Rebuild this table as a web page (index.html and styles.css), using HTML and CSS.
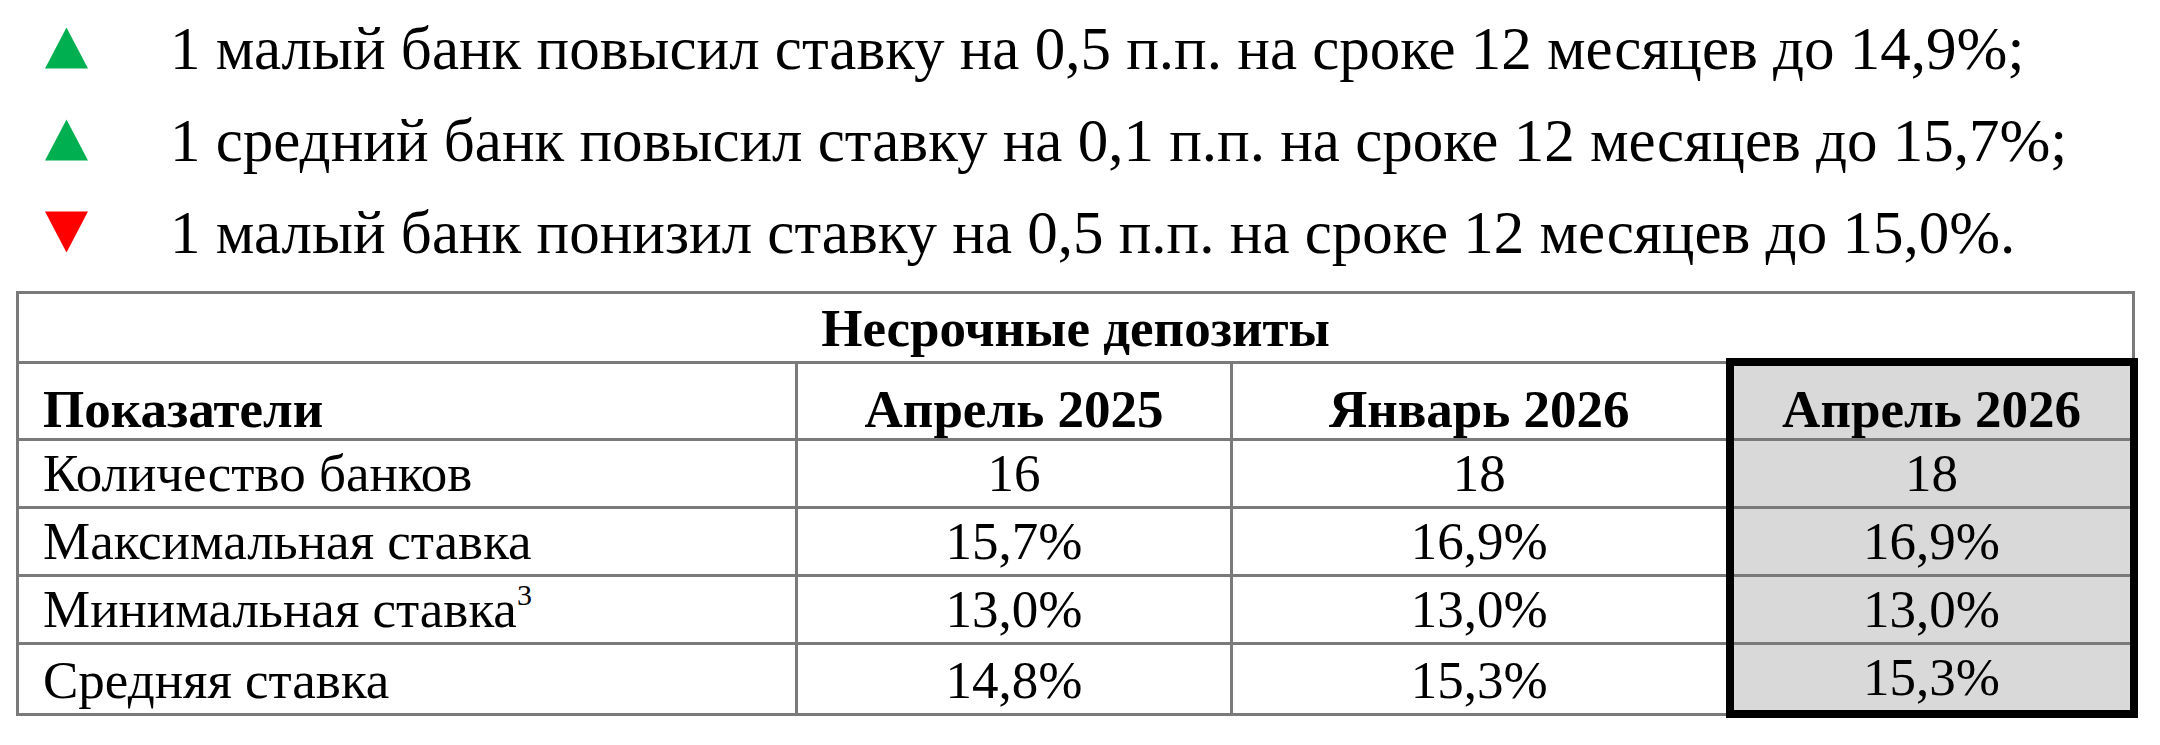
FILE: index.html
```html
<!DOCTYPE html>
<html lang="ru">
<head>
<meta charset="utf-8">
<title>Несрочные депозиты</title>
<link rel="stylesheet" href="styles.css">
</head>
<body>
<div class="page">
  <ul class="changes">
    <li class="change">
      <span class="mark"><svg class="tri" viewBox="0 0 44 42"><polygon points="22,0 44,42 0,42" fill="#00b050"/></svg></span>
      <span class="text">1 малый банк повысил ставку на 0,5 п.п. на сроке 12 месяцев до 14,9%;</span>
    </li>
    <li class="change">
      <span class="mark"><svg class="tri" viewBox="0 0 44 42"><polygon points="22,0 44,42 0,42" fill="#00b050"/></svg></span>
      <span class="text">1 средний банк повысил ставку на 0,1 п.п. на сроке 12 месяцев до 15,7%;</span>
    </li>
    <li class="change">
      <span class="mark"><svg class="tri" viewBox="0 0 44 42"><polygon points="0,0 44,0 22,42" fill="#ff0000"/></svg></span>
      <span class="text">1 малый банк понизил ставку на 0,5 п.п. на сроке 12 месяцев до 15,0%.</span>
    </li>
  </ul>

  <table class="rates">
    <colgroup>
      <col class="c1"><col class="c2"><col class="c3"><col class="c4">
    </colgroup>
    <tr class="title-row">
      <th colspan="4">Несрочные депозиты</th>
    </tr>
    <tr class="head-row">
      <th class="label">Показатели</th>
      <th>Апрель 2025</th>
      <th>Январь 2026</th>
      <th class="hl hl-top">Апрель 2026</th>
    </tr>
    <tr>
      <td class="label">Количество банков</td>
      <td>16</td>
      <td>18</td>
      <td class="hl">18</td>
    </tr>
    <tr>
      <td class="label">Максимальная ставка</td>
      <td>15,7%</td>
      <td>16,9%</td>
      <td class="hl">16,9%</td>
    </tr>
    <tr>
      <td class="label">Минимальная ставка<sup>3</sup></td>
      <td>13,0%</td>
      <td>13,0%</td>
      <td class="hl">13,0%</td>
    </tr>
    <tr>
      <td class="label">Средняя ставка</td>
      <td>14,8%</td>
      <td>15,3%</td>
      <td class="hl hl-bottom">15,3%</td>
    </tr>
  </table>
</div>
</body>
</html>
```

FILE: styles.css
```css
html, body {
  margin: 0;
  padding: 0;
  background: #ffffff;
}

body {
  font-family: "Liberation Serif", "Times New Roman", serif;
  color: #000000;
}

.page {
  padding-top: 3px;
}

.changes {
  list-style: none;
  margin: 0;
  padding: 0;
}

.change {
  display: flex;
  align-items: baseline;
  font-size: 61px;
  line-height: 92px;
  height: 92px;
}

.mark {
  width: 170px;
  flex: none;
  display: flex;
  padding-left: 45px;
  box-sizing: border-box;
}

.tri {
  width: 43px;
  height: 42px;
  display: block;
}

.text {
  white-space: nowrap;
}

.rates {
  margin: 12px 0 0 16px;
  width: 2119px;
  border-collapse: collapse;
  table-layout: fixed;
  font-size: 53px;
}

.c1 { width: 779px; }
.c2 { width: 435px; }
.c3 { width: 498px; }
.c4 { width: 404px; }

.rates th,
.rates td {
  border: 3px solid #7a7a7a;
  padding: 0;
  text-align: center;
  vertical-align: bottom;
  line-height: 65px;
  white-space: nowrap;
}

.rates th {
  font-weight: bold;
}

.title-row th {
  padding-top: 4px;
  line-height: 60px;
}

.head-row th {
  padding-top: 14px;
  line-height: 58px;
}

.rates .label {
  text-align: left;
  padding-left: 24px;
}

.rates .hl {
  background: #d9d9d9;
  border-left: 8px solid #000000;
  border-right: 8px solid #000000;
}

.rates .hl-top {
  border-top: 8px solid #000000;
}

.rates .hl-bottom {
  border-bottom: 8px solid #000000;
}

sup {
  font-size: 30px;
  line-height: 0;
  vertical-align: 22px;
}
```
